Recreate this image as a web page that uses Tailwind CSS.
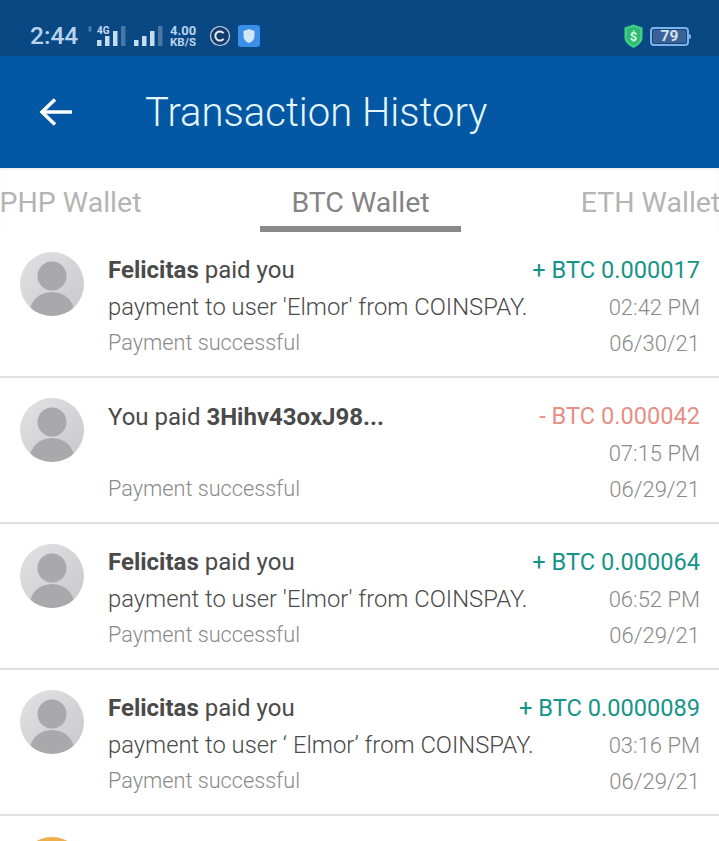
<!DOCTYPE html>
<html lang="en">
<head>
    <meta charset="UTF-8">
    <meta name="viewport" content="width=device-width, initial-scale=1.0">
    <title>Transaction History</title>
    <script src="https://cdn.jsdelivr.net/npm/@tailwindcss/browser@4"></script>
</head>
<body class="bg-white h-[841px] overflow-hidden font-['Roboto',sans-serif]">

    <!-- status bar -->
    <div class="h-[56px] bg-[#0a4883] flex items-center justify-between pl-[30px] pr-[28px] pt-[16px] text-[#b9d3ec]">
        <div class="flex items-center">
            <span class="text-[24.500px] leading-none w-[58px] font-medium">2:44</span>
            <svg width="38" height="24" viewBox="0 0 38 24" class="w-[38px] h-[24px]">
                <path d="M2 2l2 2.500H0zM2 8L0 5.500h4z" fill="#6f93bb"/>
                <text x="9" y="10" font-size="10" font-weight="700" fill="#c6dcf2" font-family="Roboto">4G</text>
                <rect x="9" y="16" width="4.500" height="6" fill="#c6dcf2"/>
                <rect x="17" y="12" width="4.500" height="10" fill="#c6dcf2"/>
                <rect x="25" y="7" width="4.500" height="15" fill="#c6dcf2"/>
                <rect x="33" y="2" width="4.500" height="20" fill="#4a76a5"/>
            </svg>
            <svg width="30" height="24" viewBox="0 0 30 24" class="w-[30px] h-[24px] ml-[8px]">
                <rect x="0" y="16" width="4.500" height="6" fill="#c6dcf2"/>
                <rect x="8" y="12" width="4.500" height="10" fill="#c6dcf2"/>
                <rect x="16" y="7" width="4.500" height="15" fill="#c6dcf2"/>
                <rect x="24" y="2" width="4.500" height="20" fill="#4a76a5"/>
            </svg>
            <div class="ml-[6px] w-[28px] flex flex-col gap-[1px] font-bold whitespace-nowrap">
                <div class="text-[13px] leading-[11px]">4.00</div>
                <div class="text-[11.500px] leading-[10px]">KB/S</div>
            </div>
            <svg width="22" height="22" viewBox="0 0 22 22" class="w-[22px] h-[22px] ml-[11px]">
                <circle cx="11" cy="11" r="9.500" fill="#123a6b" stroke="#c9d9ea" stroke-width="1.200"/>
                <path d="M14.600 8.200a4.600 4.600 0 1 0 0 5.600" fill="none" stroke="#e4eef8" stroke-width="2"/>
            </svg>
            <div class="ml-[7px] w-[22px] h-[22px] rounded-[3px] bg-[#3b8fe8] flex items-center justify-center">
                <svg width="14" height="16" viewBox="0 0 14 16" class="w-[14px] h-[16px]">
                    <path d="M7 1l5.500 2v5c0 3.500-2.500 6-5.500 7C4 14 1.500 11.500 1.500 8V3z" fill="#d3e7f8"/>
                </svg>
            </div>
        </div>
        <div class="flex items-center">
            <svg width="21" height="24" viewBox="0 0 20 24" class="w-[21px] h-[24px]">
                <path d="M10 0.500l9 3v10c0 5-4.500 8-9 10.500C5.500 21.500 1 18.500 1 13.500v-10z" fill="#3ecf83"/>
                <path d="M10 3l6.500 2.200v8c0 3.800-3.200 6-6.500 8-3.300-2-6.500-4.200-6.500-8v-8z" fill="#2fb873"/>
                <text x="10" y="17" text-anchor="middle" font-size="13" font-weight="700" fill="#d6f5e3" font-family="Roboto">$</text>
            </svg>
            <div class="ml-[6px] w-[39px] h-[19px] rounded-[4px] border-2 border-[#7fb0e6] bg-[#0a4883] flex items-center justify-center p-[1px]">
                <span class="w-full h-full bg-[#3a6296] rounded-[2px] text-[15.500px] leading-[13px] font-bold text-[#d5e2f0] text-center">79</span>
            </div>
            <div class="w-[2px] h-[5px] bg-[#7fb0e6] rounded-r-sm"></div>
        </div>
    </div>

    <!-- app bar -->
    <div class="h-[112px] bg-[#0357a3] flex items-center">
        <svg width="34" height="32" viewBox="0 0 34 32" class="w-[34px] h-[32px] ml-[39px]">
            <path d="M33 16H3M16 3.500L3 16l13 12.500" fill="none" stroke="#fff" stroke-width="3.500"/>
        </svg>
        <h1 class="ml-[72px] pt-[2px] text-[40px] leading-none font-light text-[#e4f6fd] whitespace-nowrap">Transaction History</h1>
    </div>

    <!-- tabs -->
    <div class="h-[64px] flex justify-center overflow-hidden pl-[2px] shadow-[inset_0_2px_2px_rgba(0,0,0,0.06)]">
        <div class="w-[290px] shrink-0 flex flex-col items-center pt-[19px] text-[#b4b4b4] text-[28.500px] leading-[32px]">PHP Wallet</div>
        <div class="w-[290px] shrink-0 flex flex-col items-center pt-[19px] text-[#848484] text-[28.500px] leading-[32px]">
            <span>BTC Wallet</span>
            <div class="w-[201px] h-[6px] bg-[#8a8a8a] mt-[7px]"></div>
        </div>
        <div class="w-[290px] shrink-0 flex flex-col items-center pt-[19px] text-[#b4b4b4] text-[28.500px] leading-[32px]">ETH Wallet</div>
    </div>

    <!-- rows -->
    <div>
        <div class="h-[146px] border-b-2 border-[#dedede] flex pl-[20px] pr-[19px] pt-[20px]">
            <svg width="64" height="64" viewBox="0 0 64 64" class="w-[64px] h-[64px] shrink-0">
                <defs>
                    <clipPath id="avatar-clip"><circle cx="32" cy="32" r="32"/></clipPath>
                    <linearGradient id="avatar-bg" x1="0" y1="0" x2="1" y2="1"><stop offset="0" stop-color="#e2e2e4"/><stop offset="1" stop-color="#c8c8cb"/></linearGradient>
                </defs>
                <circle cx="32" cy="32" r="32" fill="url(#avatar-bg)"/>
                <circle cx="32" cy="24" r="14.500" fill="#a9a9ac"/>
                <ellipse cx="32" cy="60" rx="22" ry="20" fill="#a9a9ac" clip-path="url(#avatar-clip)"/>
            </svg>
            <div class="flex-1 ml-[24px]">
                <div class="flex justify-between items-center h-[38px] text-[24px]">
                    <span class="text-[#4a4a4a] mb-[2px]"><b class="font-bold">Felicitas</b> paid you</span>
                    <span class="text-[#169488] text-[23.600px]">+ BTC 0.000017</span>
                </div>
                <div class="flex justify-between items-center h-[35px] text-[23.800px] font-light text-[#4a4a4a]">
                    <span>payment to user 'Elmor' from COINSPAY.</span>
                    <span class="text-[#8a8a8a] text-[22px]">02:42 PM</span>
                </div>
                <div class="flex justify-between items-center h-[36px] font-light text-[#8a8a8a]">
                    <span class="text-[21.700px]">Payment successful</span>
                    <span class="text-[22px]">06/30/21</span>
                </div>
            </div>
        </div>

        <div class="h-[146px] border-b-2 border-[#dedede] flex pl-[20px] pr-[19px] pt-[20px]">
            <svg width="64" height="64" viewBox="0 0 64 64" class="w-[64px] h-[64px] shrink-0">
                <circle cx="32" cy="32" r="32" fill="url(#avatar-bg)"/>
                <circle cx="32" cy="24" r="14.500" fill="#a9a9ac"/>
                <ellipse cx="32" cy="60" rx="22" ry="20" fill="#a9a9ac" clip-path="url(#avatar-clip)"/>
            </svg>
            <div class="flex-1 ml-[24px]">
                <div class="flex justify-between items-center h-[38px] text-[24px]">
                    <span class="text-[#4a4a4a]">You paid <b class="font-bold">3Hihv43oxJ98...</b></span>
                    <span class="text-[#e58f85] text-[23.600px]">- BTC 0.000042</span>
                </div>
                <div class="flex justify-between items-center h-[35px] text-[23.800px] font-light text-[#4a4a4a]">
                    <span></span>
                    <span class="text-[#8a8a8a] text-[22px]">07:15 PM</span>
                </div>
                <div class="flex justify-between items-center h-[36px] font-light text-[#8a8a8a]">
                    <span class="text-[21.700px]">Payment successful</span>
                    <span class="text-[22px]">06/29/21</span>
                </div>
            </div>
        </div>

        <div class="h-[146px] border-b-2 border-[#dedede] flex pl-[20px] pr-[19px] pt-[20px]">
            <svg width="64" height="64" viewBox="0 0 64 64" class="w-[64px] h-[64px] shrink-0">
                <circle cx="32" cy="32" r="32" fill="url(#avatar-bg)"/>
                <circle cx="32" cy="24" r="14.500" fill="#a9a9ac"/>
                <ellipse cx="32" cy="60" rx="22" ry="20" fill="#a9a9ac" clip-path="url(#avatar-clip)"/>
            </svg>
            <div class="flex-1 ml-[24px]">
                <div class="flex justify-between items-center h-[38px] text-[24px]">
                    <span class="text-[#4a4a4a] mb-[2px]"><b class="font-bold">Felicitas</b> paid you</span>
                    <span class="text-[#169488] text-[23.600px]">+ BTC 0.000064</span>
                </div>
                <div class="flex justify-between items-center h-[35px] text-[23.800px] font-light text-[#4a4a4a]">
                    <span>payment to user 'Elmor' from COINSPAY.</span>
                    <span class="text-[#8a8a8a] text-[22px]">06:52 PM</span>
                </div>
                <div class="flex justify-between items-center h-[36px] font-light text-[#8a8a8a]">
                    <span class="text-[21.700px]">Payment successful</span>
                    <span class="text-[22px]">06/29/21</span>
                </div>
            </div>
        </div>

        <div class="h-[146px] border-b-2 border-[#dedede] flex pl-[20px] pr-[19px] pt-[20px]">
            <svg width="64" height="64" viewBox="0 0 64 64" class="w-[64px] h-[64px] shrink-0">
                <circle cx="32" cy="32" r="32" fill="url(#avatar-bg)"/>
                <circle cx="32" cy="24" r="14.500" fill="#a9a9ac"/>
                <ellipse cx="32" cy="60" rx="22" ry="20" fill="#a9a9ac" clip-path="url(#avatar-clip)"/>
            </svg>
            <div class="flex-1 ml-[24px]">
                <div class="flex justify-between items-center h-[38px] text-[24px]">
                    <span class="text-[#4a4a4a] mb-[2px]"><b class="font-bold">Felicitas</b> paid you</span>
                    <span class="text-[#169488] text-[23.600px]">+ BTC 0.0000089</span>
                </div>
                <div class="flex justify-between items-center h-[35px] text-[23.800px] font-light text-[#4a4a4a]">
                    <span>payment to user ‘ Elmor’ from COINSPAY.</span>
                    <span class="text-[#8a8a8a] text-[22px]">03:16 PM</span>
                </div>
                <div class="flex justify-between items-center h-[36px] font-light text-[#8a8a8a]">
                    <span class="text-[21.700px]">Payment successful</span>
                    <span class="text-[22px]">06/29/21</span>
                </div>
            </div>
        </div>

        <div class="h-[26px] overflow-hidden pl-[20px] pt-[21px]">
            <div class="w-[64px] h-[64px] rounded-full bg-[#eeb04c]"></div>
        </div>
    </div>

</body>
</html>
